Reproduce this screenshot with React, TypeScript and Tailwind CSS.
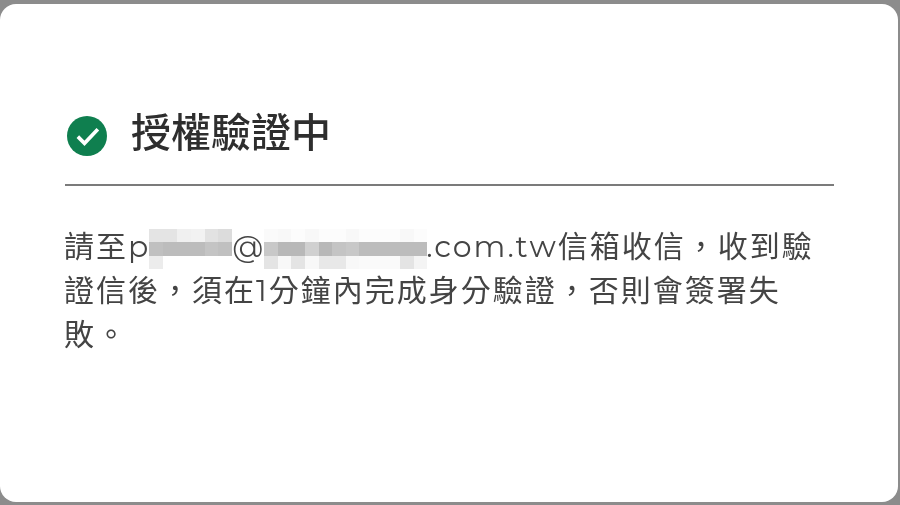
const NAME_BLUR = [
  ['#e4e4e4', '#e4e4e4', '#f0f0f0', '#f2f2f2', '#e2e2e2', '#dcdcdc'],
  ['#c0c0c0', '#bcbcbc', '#bcbcbc', '#bcbcbc', '#c4c4c4', '#c0c0c0'],
  ['#ececec', '#ffffff', '#ffffff', '#ffffff', '#ffffff', '#ffffff'],
]

const DOMAIN_BLUR = [
  ['#fafafa', '#f8f8f8', '#fcfcfc', '#f8f8f8', '#fcfcfc', '#fcfcfc', '#f8f8f8', '#fcfcfc', '#fcfcfc', '#fcfcfc', '#f8f8f8', '#fcfcfc'],
  ['#c8c8c8', '#b8b8b8', '#b8b8b8', '#d0d0d0', '#b8b8b8', '#c4c4c4', '#c8c8c8', '#bcbcbc', '#bcbcbc', '#bcbcbc', '#bcbcbc', '#bcbcbc'],
  ['#e4e4e4', '#f8f8f8', '#e4e4e4', '#f8f8f8', '#e8e8e8', '#e8e8e8', '#f8f8f8', '#fafafa', '#fafafa', '#fafafa', '#e4e4e4', '#f4f4f4'],
]

function Mosaic({ rows, cell, offset }: { rows: string[][]; cell: string; offset: string }) {
  return (
    <span className={`my-[-10px] inline-flex flex-col align-middle ${offset}`}>
      {rows.map((row, i) => (
        <span key={i} className="flex">
          {row.map((color, j) => (
            <span key={j} className={cell} style={{ backgroundColor: color }} />
          ))}
        </span>
      ))}
    </span>
  )
}

export default function App() {
  return (
    <div className="h-[505px] w-[900px] overflow-hidden bg-[#8c8c8c] pt-[4px] pr-[2px] pb-[3px] font-['Montserrat','Liberation_Sans','Noto_Sans_CJK_TC',sans-serif]">
      <div className="h-full rounded-[16px] bg-white pt-[104px] pr-[64px] pl-[65px] blur-[0.6px]">
        <div className="flex items-start gap-[24px] border-b-[2px] border-[#7b7b7b] pb-[26px] pl-[2px]">
          <svg viewBox="0 0 24 24" className="mt-[8px] h-[40px] w-[40px] shrink-0">
            <circle cx="12" cy="12" r="12" fill="#0f7f4f" />
            <path d="M6.5 12.4l4 4L18.5 8" fill="none" stroke="#fff" strokeWidth="2.2" />
          </svg>
          <h1 className="text-[40px] leading-[50px] font-medium text-[#2e2e2e]">授權驗證中</h1>
        </div>
        <p className="mt-[39px] ml-[-1px] w-[770px] text-[30px] leading-[44px] tracking-[2px] text-[#444444]">
          請至p<Mosaic rows={NAME_BLUR} cell="h-[13.5px] w-[13.8px]" offset="ml-[-1px]" />@<Mosaic rows={DOMAIN_BLUR} cell="h-[13.5px] w-[13.6px]" offset="mr-[-1px] ml-[-1px]" />.com.tw信箱收信，收到驗證信後，須在1分鐘內完成身分驗證，否則會簽署失敗。
        </p>
      </div>
    </div>
  )
}
